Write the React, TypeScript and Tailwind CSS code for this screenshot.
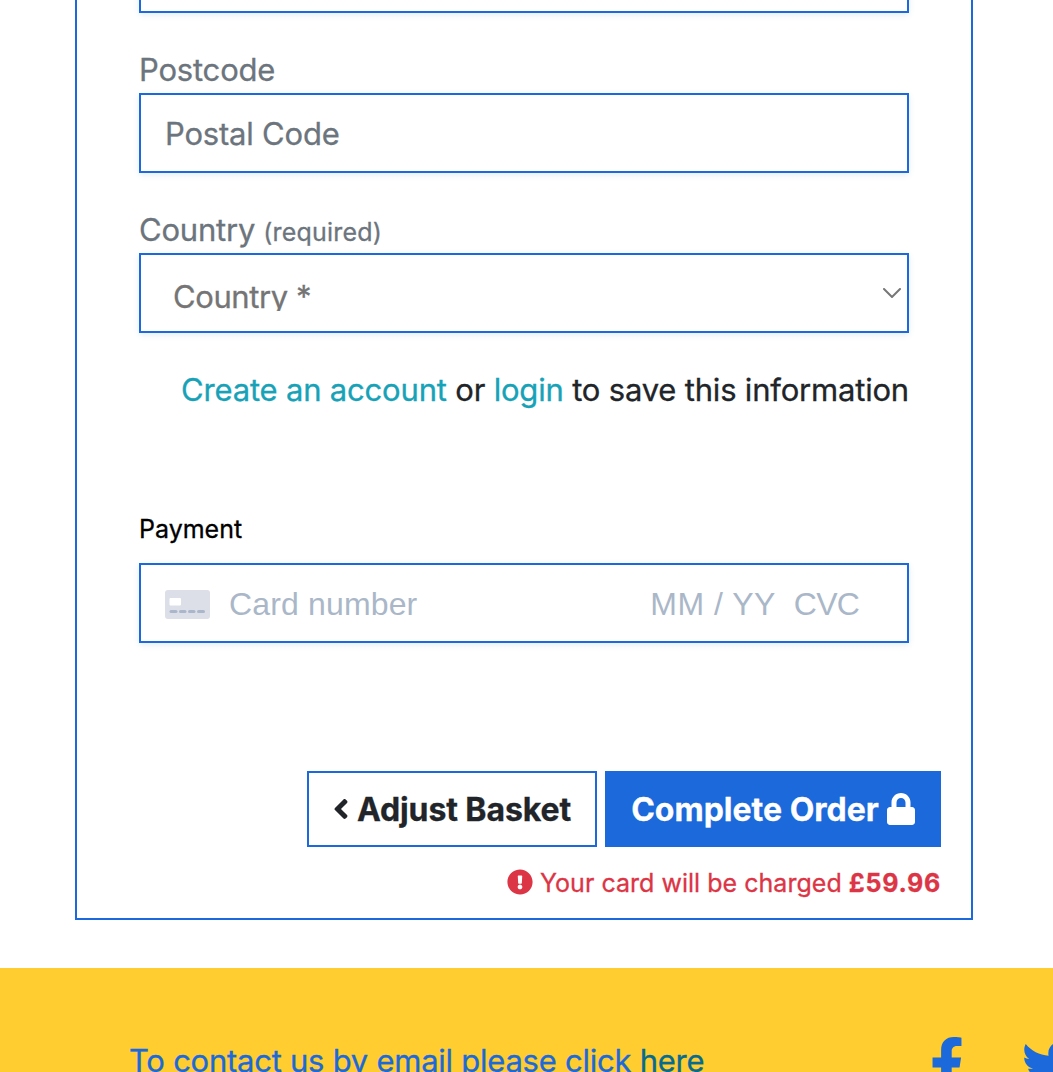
import type { ReactNode } from "react";
import { FaAngleLeft, FaExclamationCircle, FaFacebookF, FaLock, FaTwitter } from "react-icons/fa";

const field = "h-20 w-full border-2 border-[#1b69da] bg-white shadow-[0_2px_6px_rgba(27,105,160,0.12)]";

function Label({ children }: { children: ReactNode }) {
  return (
    <label className="flex h-12 items-center whitespace-nowrap pt-0.5 text-[31px] tracking-[-0.2px] text-[#6c757d]">
      {children}
    </label>
  );
}

function CardIcon() {
  return (
    <svg className="mt-0.5 h-[29px] w-[45px] shrink-0" viewBox="0 0 45 29">
      <rect width="45" height="29" rx="3" fill="#dcdfe8" />
      <rect x="4.5" y="8" width="11.5" height="7.5" rx="1" fill="#fff" />
      <g fill="#aab7cb">
        <rect x="4.5" y="20" width="8" height="3" rx="1.5" />
        <rect x="14" y="20" width="7.5" height="3" rx="1.5" />
        <rect x="23" y="20" width="7.5" height="3" rx="1.5" />
        <rect x="32" y="20" width="8" height="3" rx="1.5" />
      </g>
    </svg>
  );
}

export default function App() {
  return (
    <div className="h-[1072px] w-[1053px] overflow-hidden bg-white font-['Inter',sans-serif] text-[#212529] [-webkit-text-stroke:0.3px]">
      <main className="ml-[75px] flow-root h-[920px] w-[898px] border-x-2 border-b-2 border-[#1b69da] px-[62px]">
        <div className="-mt-[67px]">
          <div className={field} />
        </div>
        <div className="mt-8">
          <Label>Postcode</Label>
          <div className={`${field} flex items-center px-6 pt-0.5 text-[31px] tracking-[-0.2px] text-[#6c757d]`}>
            Postal Code
          </div>
        </div>
        <div className="mt-8">
          <Label>
            Country<small className="ml-2 mt-1.5 text-[25px] tracking-[0.2px]">(required)</small>
          </Label>
          <div className={`${field} flex items-center justify-between pl-8 pr-1.5 text-[31px] tracking-[-0.4px] text-[#757575]`}>
            <span className="h-[35px] overflow-hidden leading-[42px]">Country *</span>
            <svg className="h-[10px] w-[18px]" viewBox="0 0 18 10" fill="none" stroke="#777" strokeWidth="2">
              <path d="M1 1l8 8 8-8" strokeLinecap="round" />
            </svg>
          </div>
        </div>
        <p className="mt-[33px] h-12 whitespace-nowrap text-right text-[31px] leading-[48px] tracking-[-0.19px]">
          <a className="text-[#17a2b8]">Create an account</a> or <a className="text-[#17a2b8]">login</a> to save this
          information
        </p>
        <h2 className="mt-24 h-[38px] text-[25px] leading-[38px] text-black">Payment</h2>
        <div
          className={`${field} mt-[15px] flex items-center pl-6 pr-12 font-['Liberation_Sans',sans-serif] text-[32px] text-[#aab7c8] [-webkit-text-stroke:0]`}
        >
          <CardIcon />
          <span className="ml-[19px] mt-0.5 flex-1 tracking-[0.15px]">Card number</span>
          <span className="mt-0.5 tracking-[0.5px]">MM / YY</span>
          <span className="ml-[18px] mt-0.5 tracking-[-0.8px] [font-kerning:none]">CVC</span>
        </div>
        <div className="-mr-8 mt-32 flex justify-end gap-2 text-[32px] font-bold">
          <button className="flex h-[76px] w-[290px] items-center justify-center whitespace-nowrap border-2 border-[#1b69da]">
            <FaAngleLeft className="-ml-0.5 h-8 w-5" />
            <span className="ml-1.5 mt-0.5 tracking-[-0.1px]">Adjust Basket</span>
          </button>
          <button className="flex h-[76px] w-[336px] items-center justify-center gap-2 whitespace-nowrap bg-[#1b69da] text-white">
            <span className="mt-0.5">Complete Order</span>
            <FaLock className="h-8 w-7" />
          </button>
        </div>
        <p className="-mr-8 mt-[17px] flex h-[38px] items-center justify-end whitespace-nowrap text-[25px] text-[#dc3545]">
          <FaExclamationCircle className="mr-[7px] size-[26px] -translate-y-px" />
          <span className="mt-0.5 tracking-[0.03px]">
            Your card will be charged <b className="tracking-[0.7px]">£59.96</b>
          </span>
        </p>
      </main>
      <footer className="mt-12 flex h-[104px] items-start bg-[#ffcd30] pl-[129px] text-[#1b69da]">
        <p className="mt-[69px] w-[801px] shrink-0 whitespace-nowrap text-[31px] leading-[48px] tracking-[-0.25px]">
          To contact us by email please click <a className="text-[#066a91]">here</a>
        </p>
        <FaFacebookF className="mt-[69px] h-[54px] w-[34px] shrink-0" />
        <FaTwitter className="ml-[58px] mt-[69px] size-[54px] shrink-0" />
      </footer>
    </div>
  );
}
